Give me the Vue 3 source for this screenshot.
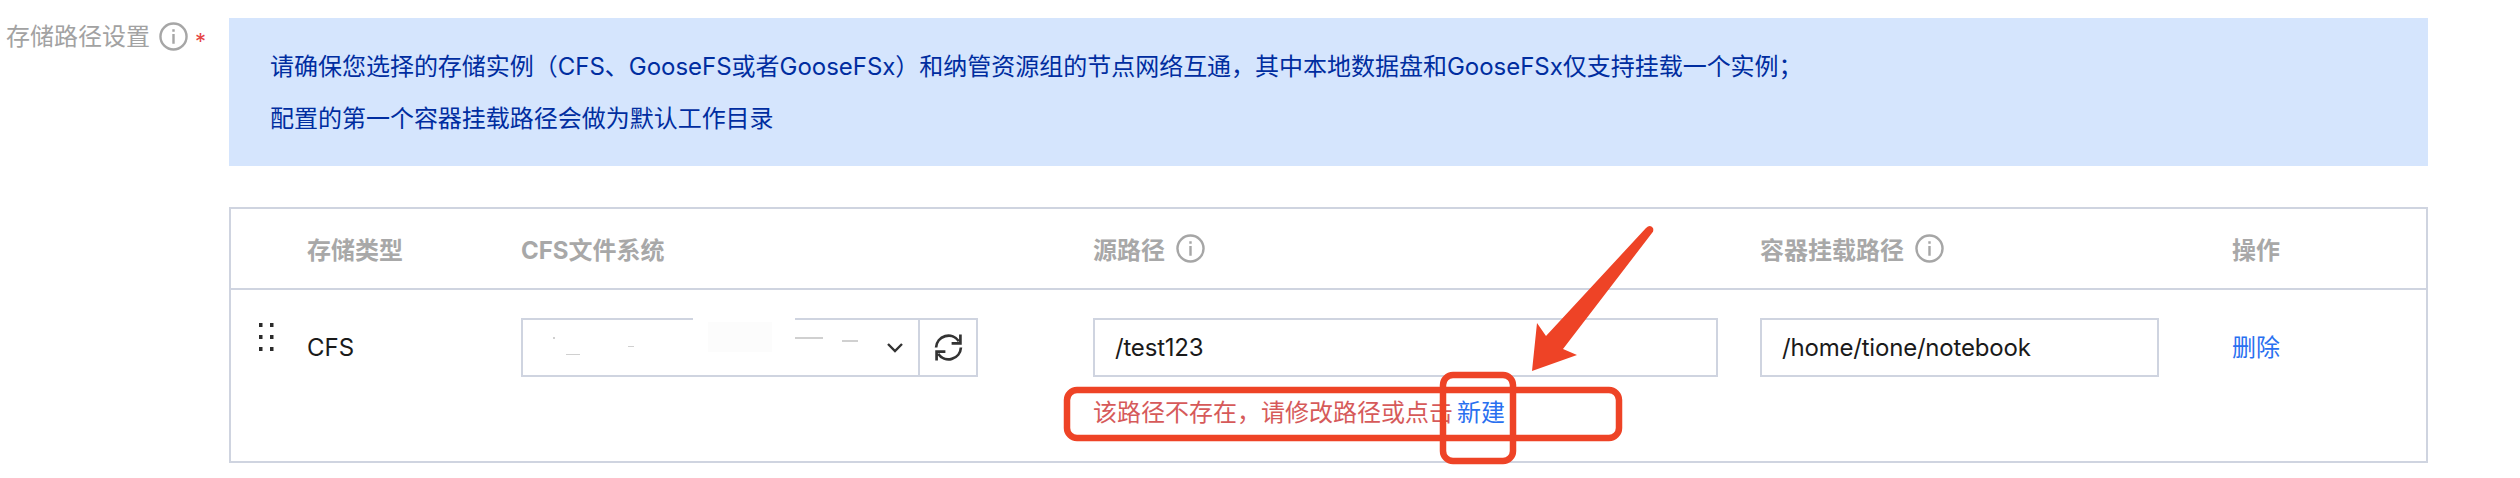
<script setup>
const columns = [
  { key: 'grip', label: '' },
  { key: 'type', label: '存储类型' },
  { key: 'cfs', label: 'CFS文件系统' },
  { key: 'source', label: '源路径', info: true },
  { key: 'mount', label: '容器挂载路径', info: true },
  { key: 'action', label: '操作' },
]

// leftovers of the redacted file system name
const specks = [
  { left: 553, top: 337, width: 2, height: 2 },
  { left: 566, top: 354, width: 14, height: 1 },
  { left: 628, top: 346, width: 6, height: 1 },
  { left: 795, top: 337, width: 28, height: 2 },
  { left: 842, top: 340, width: 16, height: 2 },
]
</script>

<template>
  <div class="page">
    <div class="label">
      <span>存储路径设置</span>
      <svg class="info info--label" viewBox="0 0 30 30" aria-hidden="true">
        <circle cx="15" cy="15" r="13.5" />
        <path d="M15 12.5v10M15 7.5v2.5" />
      </svg>
      <span class="required">*</span>
    </div>

    <div class="content">
      <div class="alert">
        <p>请确保您选择的存储实例（CFS、GooseFS或者GooseFSx）和纳管资源组的节点网络互通，其中本地数据盘和GooseFSx仅支持挂载一个实例；</p>
        <p>配置的第一个容器挂载路径会做为默认工作目录</p>
      </div>

      <div class="table">
        <div class="table__head">
          <div v-for="col in columns" :key="col.key" class="table__th">
            <span>{{ col.label }}</span>
            <svg v-if="col.info" class="info" viewBox="0 0 30 30" aria-hidden="true">
              <circle cx="15" cy="15" r="13.5" />
              <path d="M15 12.5v10M15 7.5v2.5" />
            </svg>
          </div>
        </div>

        <div class="table__row">
          <div class="cell cell--grip">
            <svg width="18" height="29" viewBox="0 0 18 29" aria-hidden="true">
              <path d="M1 0h3.500v4H1zM12 0h3.500v4H12zM1 12h3.500v4H1zM12 12h3.500v4H12zM1 24h3.500v4H1zM12 24h3.500v4H12z" fill="#2b2b2b" />
            </svg>
          </div>
          <div class="cell">CFS</div>
          <div class="cell">
            <div class="picker">
              <div class="picker__select">
                <svg class="chevron" viewBox="0 0 16 10" aria-hidden="true">
                  <path d="M1 1l7 7 7-7" />
                </svg>
              </div>
              <button class="picker__refresh" type="button" aria-label="刷新">
                <svg viewBox="0 0 28 28" width="29" height="29" aria-hidden="true">
                  <path d="M2 14A12 12 0 0 1 24 8M25.500 1.500v8.500h-8.500M26 14A12 12 0 0 1 4 20M2.500 26.500v-8.500h8.500" />
                </svg>
              </button>
            </div>
          </div>
          <div class="cell">
            <input class="input input--source" value="/test123" readonly />
            <div class="error">该路径不存在，请修改路径或点击<a class="link">新建</a></div>
          </div>
          <div class="cell">
            <input class="input input--mount" value="/home/tione/notebook" readonly />
          </div>
          <div class="cell"><a class="link">删除</a></div>
        </div>
      </div>
    </div>

    <!-- redaction painted over the select -->
    <div class="redact redact--border"></div>
    <div class="redact redact--patch"></div>
    <span
      v-for="(s, i) in specks"
      :key="i"
      class="speck"
      :style="{ left: s.left + 'px', top: s.top + 'px', width: s.width + 'px', height: s.height + 'px' }"
    ></span>

    <!-- hand drawn annotation on top of the screenshot -->
    <svg class="markup" width="2520" height="478" viewBox="0 0 2520 478" aria-hidden="true">
      <rect x="1067" y="390" width="552" height="48" rx="10" />
      <rect x="1443" y="375" width="70" height="86" rx="10" />
      <path class="markup__arrow" d="M1532 371L1537 323L1546 336L1646 228Q1650 224 1653 228Q1654 231 1652 233L1563 349L1577 355Z" />
    </svg>
  </div>
</template>

<style scoped>
.page {
  position: relative;
  display: flex;
  width: 2520px;
  height: 478px;
  overflow: hidden;
  background: #fff;
  font-family: Inter, "Noto Sans CJK SC", sans-serif;
  font-size: 24px;
  color: #1a1a1a;
}

.label {
  display: flex;
  align-items: flex-start;
  width: 229px;
  padding: 22px 0 0 6px;
  box-sizing: border-box;
  line-height: 30px;
  color: #a2a2a2;
}

.info {
  flex: none;
  width: 29px;
  height: 29px;
  margin-left: 11px;
  fill: none;
  stroke: #a6a6a6;
  stroke-width: 2.5;
}

.info--label {
  margin-left: 9px;
}

.required {
  margin: 4px 0 0 7px;
  font-size: 22px;
  color: #e54545;
}

.content {
  width: 2199px;
  padding-top: 18px;
}

.alert {
  height: 148px;
  padding: 23px 41px 0;
  box-sizing: border-box;
  background: #d5e5fd;
  color: #002da0;
  line-height: 52px;
  letter-spacing: -0.02px;
}

.alert p {
  margin: 0;
  white-space: nowrap;
}

.table {
  height: 256px;
  margin-top: 41px;
  border: 2px solid #cfd4e0;
  box-sizing: border-box;
}

.table__head,
.table__row {
  display: grid;
  grid-template-columns: 76px 214px 572px 667px 472px 1fr;
}

.table__head {
  height: 79px;
  border-bottom: 2px solid #cfd4e0;
}

.table__th {
  display: flex;
  align-items: center;
  font-weight: 700;
  color: #a8a8a8;
}

.table__row {
  height: 172px;
}

.cell {
  padding-top: 28px;
  line-height: 59px;
}

.cell--grip {
  padding: 33px 0 0 27px;
  line-height: 0;
}

.picker {
  display: flex;
  width: 457px;
  height: 59px;
  border: 2px solid #cfd4e0;
  box-sizing: border-box;
}

.picker__select {
  display: flex;
  align-items: center;
  justify-content: flex-end;
  flex: 1;
  padding-right: 15px;
  border-right: 2px solid #cfd4e0;
}

.chevron {
  width: 16px;
  height: 10px;
  fill: none;
  stroke: #333;
  stroke-width: 2.4;
}

.picker__refresh {
  display: grid;
  place-items: center;
  width: 56px;
  padding: 0;
  border: 0;
  background: none;
}

.picker__refresh svg {
  fill: none;
  stroke: #333;
  stroke-width: 2.6;
}

.input {
  display: block;
  height: 59px;
  padding: 0 20px;
  border: 2px solid #cfd4e0;
  box-sizing: border-box;
  outline: none;
  font: inherit;
  letter-spacing: -0.2px;
  color: #1a1a1a;
}

.input--source {
  width: 625px;
}

.input--mount {
  width: 399px;
}

.error {
  margin-top: 18px;
  line-height: 36px;
  color: #d65a5a;
  white-space: nowrap;
}

.error .link {
  margin-left: 4px;
}

.link {
  color: #2970f0;
}

.redact {
  position: absolute;
}

.redact--border {
  left: 693px;
  top: 316px;
  width: 102px;
  height: 4px;
  background: #fff;
}

.redact--patch {
  left: 708px;
  top: 322px;
  width: 64px;
  height: 30px;
  background: #fcfcfc;
}

.speck {
  position: absolute;
  background: #8a8a8a;
  opacity: 0.4;
}

.markup {
  position: absolute;
  left: 0;
  top: 0;
  fill: none;
  stroke: #ee4326;
  stroke-width: 6.5;
}

.markup__arrow {
  fill: #ee4326;
  stroke: none;
}
</style>
